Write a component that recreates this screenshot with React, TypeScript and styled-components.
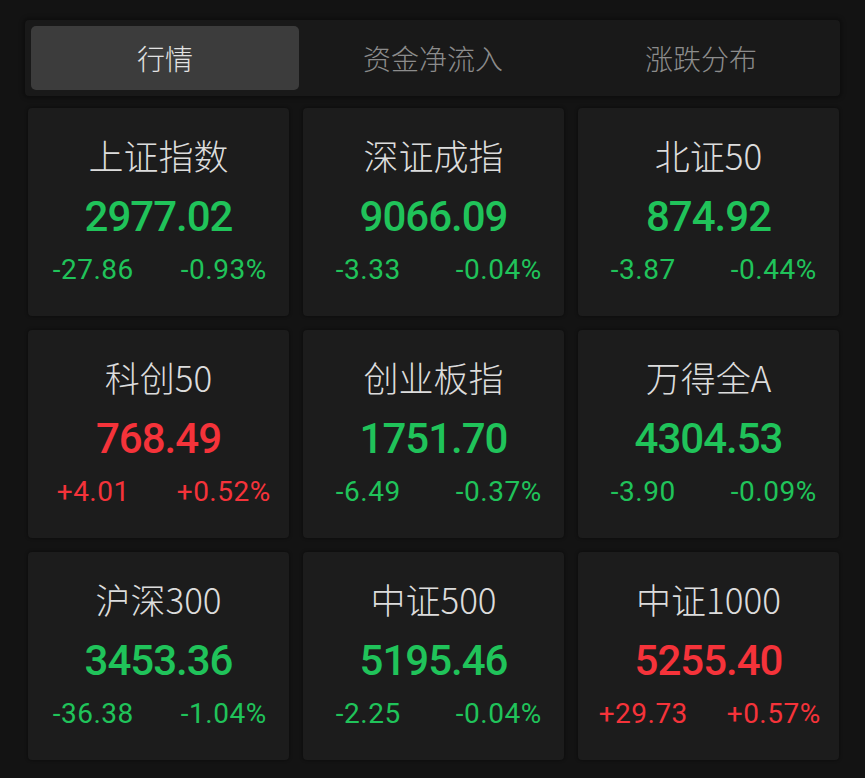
import React from "react";
import styled, { createGlobalStyle } from "styled-components";

const GlobalStyle = createGlobalStyle`
  html, body {
    margin: 0;
    padding: 0;
    background: #131313;
  }
  body {
    font-family: Roboto, "Noto Sans CJK SC", sans-serif;
  }
`;

const Page = styled.div`
  width: 865px;
  height: 778px;
  box-sizing: border-box;
  padding: 20px 25px 0 25px;
  background: #131313;
`;

const TabBar = styled.div`
  width: 815px;
  box-sizing: border-box;
  display: grid;
  grid-template-columns: repeat(3, 1fr);
  padding: 6px 5px 6px 6px;
  background: #191919;
  border-radius: 4px;
  box-shadow: 0 0 4px 2px rgba(0, 0, 0, 0.35);
`;

const Tab = styled.div<{ $active?: boolean }>`
  height: 64px;
  display: flex;
  align-items: center;
  justify-content: center;
  border-radius: 5px;
  background: ${(p) => (p.$active ? "#3c3c3c" : "transparent")};
  color: ${(p) => (p.$active ? "#e2e2e2" : "#8c8c8c")};
  font-family: "Noto Sans CJK SC", sans-serif;
  font-weight: 300;
  font-size: 28px;
`;

const Grid = styled.div`
  margin: 12px 0 0 3px;
  display: grid;
  grid-template-columns: repeat(3, 261px);
  grid-auto-rows: 208px;
  gap: 14px;
`;

const Card = styled.div`
  background: #1c1c1c;
  border-radius: 4px;
  display: flex;
  flex-direction: column;
  align-items: center;
  padding-top: 27px;
  box-sizing: border-box;
  box-shadow: 0 0 3px 1px rgba(0, 0, 0, 0.3);
`;

const Title = styled.div`
  font-family: "Noto Sans CJK SC", sans-serif;
  font-weight: 300;
  font-size: 35px;
  line-height: 40px;
  color: #dcdcdc;
`;

const Value = styled.div<{ $up: boolean }>`
  margin-top: 18px;
  font-family: Roboto, sans-serif;
  font-size: 42px;
  line-height: 48px;
  font-weight: 500;
  letter-spacing: -1px;
  color: ${(p) => (p.$up ? "#f5333a" : "#20c35a")};
`;

const Changes = styled.div<{ $up: boolean }>`
  margin-top: 13px;
  width: 100%;
  display: grid;
  grid-template-columns: 1fr 1fr;
  font-family: Roboto, sans-serif;
  font-size: 28px;
  line-height: 32px;
  letter-spacing: 0.5px;
  color: ${(p) => (p.$up ? "#f5333a" : "#20c35a")};
`;

const Change = styled.span`
  text-align: center;
`;

type Item = { name: string; value: string; diff: string; pct: string };

const items: Item[] = [
  { name: "上证指数", value: "2977.02", diff: "-27.86", pct: "-0.93%" },
  { name: "深证成指", value: "9066.09", diff: "-3.33", pct: "-0.04%" },
  { name: "北证50", value: "874.92", diff: "-3.87", pct: "-0.44%" },
  { name: "科创50", value: "768.49", diff: "+4.01", pct: "+0.52%" },
  { name: "创业板指", value: "1751.70", diff: "-6.49", pct: "-0.37%" },
  { name: "万得全A", value: "4304.53", diff: "-3.90", pct: "-0.09%" },
  { name: "沪深300", value: "3453.36", diff: "-36.38", pct: "-1.04%" },
  { name: "中证500", value: "5195.46", diff: "-2.25", pct: "-0.04%" },
  { name: "中证1000", value: "5255.40", diff: "+29.73", pct: "+0.57%" },
];

export default function App() {
  return (
    <>
      <GlobalStyle />
      <Page>
        <TabBar>
          <Tab $active>行情</Tab>
          <Tab>资金净流入</Tab>
          <Tab>涨跌分布</Tab>
        </TabBar>
        <Grid>
          {items.map((it) => {
            const up = it.diff.startsWith("+");
            return (
              <Card key={it.name}>
                <Title>{it.name}</Title>
                <Value $up={up}>{it.value}</Value>
                <Changes $up={up}>
                  <Change>{it.diff}</Change>
                  <Change>{it.pct}</Change>
                </Changes>
              </Card>
            );
          })}
        </Grid>
      </Page>
    </>
  );
}
